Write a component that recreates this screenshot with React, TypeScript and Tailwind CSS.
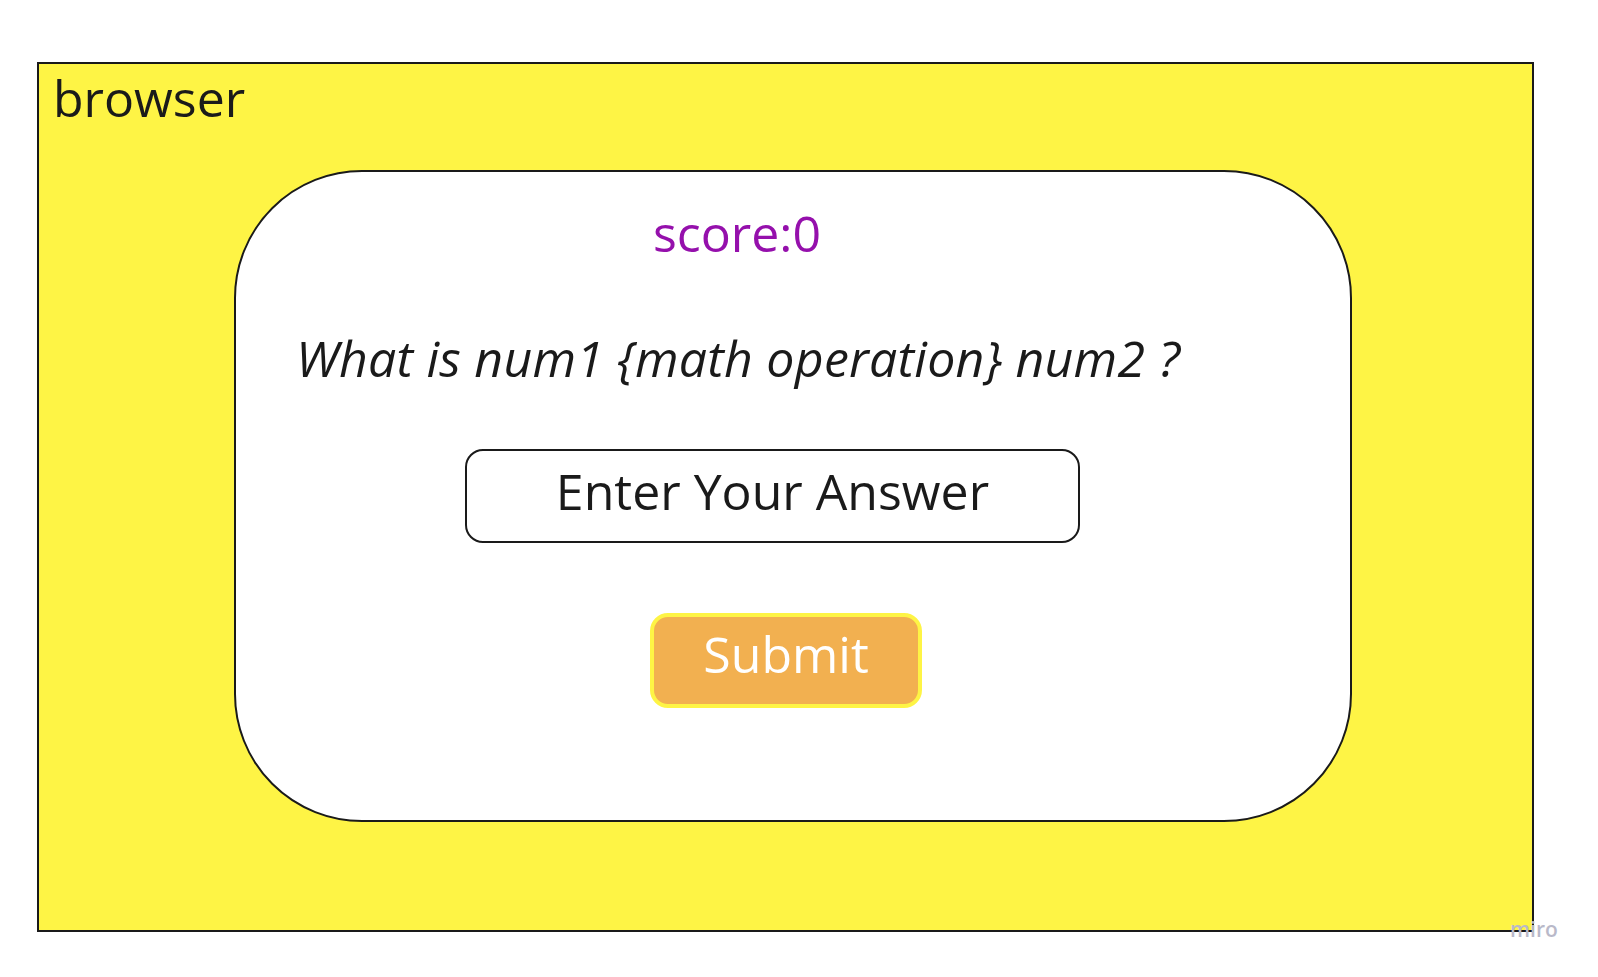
export default function App() {
    return (
        <div className="relative h-[977px] w-full bg-white pl-[37px] pt-[62px] font-['Open_Sans',sans-serif] text-[#1a1a1a]">
            <div className="h-[870px] w-[1497px] border-2 border-[#1a1a1a] bg-[#fef445]">
                <div className="pl-[14px] pt-[8.6px] text-[50px] leading-none">browser</div>

                <div className="ml-[195px] mt-[47.4px] flex h-[652px] w-[1118px] flex-col items-start rounded-[128px] border-2 border-[#1a1a1a] bg-white">
                    <div className="ml-[417px] mt-[36.3px] text-[50px] leading-none text-[#9510ac]">
                        score:0
                    </div>

                    <div className="ml-[60px] mt-[74.3px] text-[50px] italic leading-none tracking-[0.005em]">
                        What is num1 {'{'}math operation{'}'} num2 ?
                    </div>

                    <div className="ml-[229px] mt-[66.4px] flex h-[94px] w-[615px] justify-center rounded-[18px] border-2 border-[#1a1a1a] pt-[14.6px] text-[50px] leading-none">
                        Enter Your Answer
                    </div>

                    <button className="ml-[414px] mt-[70px] flex h-[95px] w-[272px] justify-center rounded-[18px] border-4 border-[#fef445] bg-[#f2b050] pt-[11.6px] text-[50px] leading-none text-white">
                        Submit
                    </button>
                </div>
            </div>

            <span className="absolute left-[1510px] top-[919px] text-[21px] font-semibold leading-none text-[#b9b9c9]">
                miro
            </span>
        </div>
    )
}
